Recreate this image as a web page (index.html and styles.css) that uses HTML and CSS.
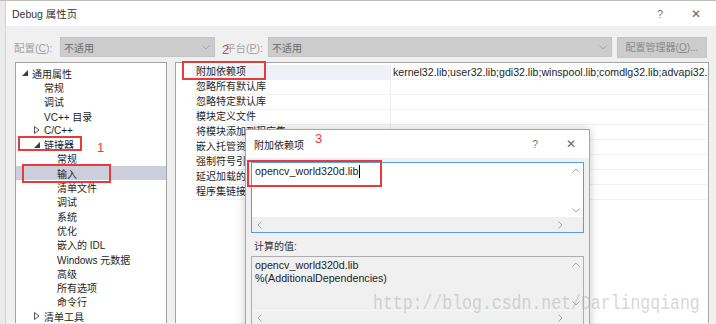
FILE: index.html
```html
<!DOCTYPE html>
<html lang="zh-CN">
  <head>
    <meta charset="UTF-8" />
    <title>Debug 属性页</title>
    <link rel="stylesheet" href="styles.css">
  </head>
  <body>
    <div class="window">
      <div class="titlebar">
        <span class="title">Debug 属性页</span>
        <span class="tb-btn">?</span>
        <span class="tb-btn close">✕</span>
      </div>

      <div class="toolbar">
        <span class="lbl lbl-config">配置(<u>C</u>):</span>
        <div class="combo combo-config">
          <span>不适用</span>
          <svg class="chev" width="8" height="5" viewBox="0 0 8 5"><polyline points="0.5,0.5 4,4 7.5,0.5" /></svg>
        </div>
        <span class="lbl lbl-platform">平台(<u>P</u>):</span>
        <div class="combo combo-platform">
          <span>不适用</span>
          <svg class="chev" width="8" height="5" viewBox="0 0 8 5"><polyline points="0.5,0.5 4,4 7.5,0.5" /></svg>
        </div>
        <div class="btn">配置管理器(<u>O</u>)...</div>
      </div>

      <div class="main">
        <div class="tree">
          <div class="node lv0"><span class="tog"><svg width="6" height="6" viewBox="0 0 6 6"><polygon class="open" points="6,0 6,6 0,6" /></svg></span>通用属性</div>
          <div class="node lv1"><span class="tog"></span>常规</div>
          <div class="node lv1"><span class="tog"></span>调试</div>
          <div class="node lv1"><span class="tog"></span>VC++ 目录</div>
          <div class="node lv1"><span class="tog"><svg width="6" height="8" viewBox="0 0 6 8"><polygon class="shut" points="0.5,0.5 5,4 0.5,7.5" /></svg></span>C/C++</div>
          <div class="node lv1"><span class="tog"><svg width="6" height="6" viewBox="0 0 6 6"><polygon class="open" points="6,0 6,6 0,6" /></svg></span>链接器</div>
          <div class="node lv2"><span class="tog"></span>常规</div>
          <div class="node lv2 sel"><span class="tog"></span>输入</div>
          <div class="node lv2"><span class="tog"></span>清单文件</div>
          <div class="node lv2"><span class="tog"></span>调试</div>
          <div class="node lv2"><span class="tog"></span>系统</div>
          <div class="node lv2"><span class="tog"></span>优化</div>
          <div class="node lv2"><span class="tog"></span>嵌入的 IDL</div>
          <div class="node lv2"><span class="tog"></span>Windows 元数据</div>
          <div class="node lv2"><span class="tog"></span>高级</div>
          <div class="node lv2"><span class="tog"></span>所有选项</div>
          <div class="node lv2"><span class="tog"></span>命令行</div>
          <div class="node lv1"><span class="tog"><svg width="6" height="8" viewBox="0 0 6 8"><polygon class="shut" points="0.5,0.5 5,4 0.5,7.5" /></svg></span>清单工具</div>
        </div>

        <div class="grid">
          <div class="prop active"><span class="gut"></span><span class="name">附加依赖项</span><span class="val">kernel32.lib;user32.lib;gdi32.lib;winspool.lib;comdlg32.lib;advapi32.lib;shell32.lib;ole32.lib</span></div>
          <div class="prop"><span class="gut"></span><span class="name">忽略所有默认库</span><span class="val"></span></div>
          <div class="prop"><span class="gut"></span><span class="name">忽略特定默认库</span><span class="val"></span></div>
          <div class="prop"><span class="gut"></span><span class="name">模块定义文件</span><span class="val"></span></div>
          <div class="prop"><span class="gut"></span><span class="name">将模块添加到程序集</span><span class="val"></span></div>
          <div class="prop"><span class="gut"></span><span class="name">嵌入托管资源文件</span><span class="val"></span></div>
          <div class="prop"><span class="gut"></span><span class="name">强制符号引用</span><span class="val"></span></div>
          <div class="prop"><span class="gut"></span><span class="name">延迟加载的 DLL</span><span class="val"></span></div>
          <div class="prop"><span class="gut"></span><span class="name">程序集链接资源</span><span class="val"></span></div>
        </div>
      </div>

      <!-- 附加依赖项 对话框 -->
      <div class="dialog">
        <div class="dlg-title">
          <span class="title">附加依赖项</span>
          <span class="tb-btn">?</span>
          <span class="tb-btn close">✕</span>
        </div>
        <div class="dlg-body">
          <div class="textbox edit">
            <div class="tb-text">opencv_world320d.lib<span class="caret"></span></div>
            <div class="vscroll">
              <svg width="8" height="5" viewBox="0 0 8 5"><polyline points="0.5,4.5 4,1 7.5,4.5" /></svg>
              <svg width="8" height="5" viewBox="0 0 8 5"><polyline points="0.5,0.5 4,4 7.5,0.5" /></svg>
            </div>
            <div class="hscroll">
              <svg width="5" height="8" viewBox="0 0 5 8"><polyline points="4.5,0.5 1,4 4.5,7.5" /></svg>
              <svg width="5" height="8" viewBox="0 0 5 8"><polyline points="0.5,0.5 4,4 0.5,7.5" /></svg>
            </div>
          </div>
          <div class="calc-lbl">计算的值:</div>
          <div class="textbox readonly">
            <div class="tb-text">opencv_world320d.lib<br>%(AdditionalDependencies)</div>
            <div class="vscroll">
              <svg width="8" height="5" viewBox="0 0 8 5"><polyline points="0.5,4.5 4,1 7.5,4.5" /></svg>
              <svg width="8" height="5" viewBox="0 0 8 5"><polyline points="0.5,0.5 4,4 7.5,0.5" /></svg>
            </div>
            <div class="hscroll">
              <svg width="5" height="8" viewBox="0 0 5 8"><polyline points="4.5,0.5 1,4 4.5,7.5" /></svg>
              <svg width="5" height="8" viewBox="0 0 5 8"><polyline points="0.5,0.5 4,4 0.5,7.5" /></svg>
            </div>
          </div>
        </div>
      </div>

      <!-- 标注 -->
      <div class="mark box-linker"></div>
      <div class="mark box-input"></div>
      <div class="mark box-prop"></div>
      <div class="mark box-edit"></div>
      <span class="num num1">1</span>
      <span class="num num2">2</span>
      <span class="num num3">3</span>

      <div class="watermark">http://blog.csdn.net/Darlingqiang</div>
    </div>
  </body>
</html>
```

FILE: styles.css
```css
body {
  margin: 0;
  background-color: #ebebeb;
  border-top: 1px solid #bdbdbd;
  font-family: "Liberation Sans", "Noto Sans CJK SC", sans-serif;
  font-size: 10px;
  color: #1e1e1e;
  overflow: hidden;
  height: 323px;
}
.window {
  position: relative;
  margin-left: 5px;
  height: 323px;
  border-left: 1px solid #d2d2d2;
  background-color: #f0f0f0;
  overflow: hidden;
}
.titlebar {
  display: flex;
  align-items: center;
  height: 25px;
  padding-left: 6px;
  background-color: #fff;
}
.title {
  flex: 1;
  color: #333;
  font-size: 10.5px;
}
.tb-btn {
  width: 36px;
  text-align: center;
  color: #777;
  font-size: 11px;
}
.titlebar .tb-btn:last-child {
  margin-right: 2px;
}
.close {
  font-size: 12px;
  color: #666;
}

.toolbar {
  display: flex;
  align-items: center;
  height: 36px;
  padding: 11px 0 5px 8px;
  box-sizing: border-box;
}
.lbl {
  color: #a2a2a2;
  font-size: 10.5px;
}
.lbl-config {
  width: 46px;
}
.lbl-platform {
  width: 43px;
  margin-left: 10px;
}
.combo {
  display: flex;
  align-items: center;
  justify-content: space-between;
  height: 20px;
  padding: 0 4px 0 3px;
  box-sizing: border-box;
  background-color: #cccccc;
  border: 1px solid #c4c4c4;
  color: #6a6a6a;
}
.combo-config {
  width: 155px;
}
.combo-platform {
  width: 344px;
}
.chev polyline,
.vscroll polyline,
.hscroll polyline {
  fill: none;
  stroke: #a8a8a8;
  stroke-width: 1;
}
.btn {
  width: 90px;
  height: 21px;
  margin-left: 5px;
  line-height: 19px;
  box-sizing: border-box;
  text-align: center;
  background-color: #cccccc;
  border: 1px solid #c4c4c4;
  color: #8a8a8a;
}

.main {
  display: flex;
  gap: 8px;
  padding-left: 9px;
  height: 261px;
}
.tree {
  width: 152px;
  box-sizing: border-box;
  padding-top: 3px;
  background-color: #fff;
  border: 1px solid #a3a3a3;
  border-bottom: none;
}
.node {
  display: flex;
  align-items: center;
  height: 14.3px;
  white-space: nowrap;
}
.lv0 { padding-left: 4px; }
.lv1 { padding-left: 16px; }
.lv2 { padding-left: 29px; }
.tog {
  display: flex;
  align-items: center;
  width: 12px;
  padding-left: 2px;
  box-sizing: border-box;
}
.open {
  fill: #3c3c3c;
}
.shut {
  fill: none;
  stroke: #555;
  stroke-width: 1;
}
.sel {
  background-color: #cccedb;
}

.grid {
  width: 534px;
  box-sizing: border-box;
  padding-top: 2px;
  background-color: #fff;
  border: 1px solid #a3a3a3;
  border-bottom: none;
}
.prop {
  display: grid;
  grid-template-columns: 16px 198px 1fr;
  height: 15px;
}
.prop span {
  line-height: 14px;
  white-space: nowrap;
  overflow: hidden;
}
.name {
  padding-left: 4px;
  border-bottom: 1px solid #f2f2f2;
}
.val {
  padding-left: 2px;
  border-left: 1px solid #ececec;
  border-bottom: 1px solid #f2f2f2;
  font-size: 10.6px;
}
.active .name {
  background-color: #eff1f8;
}

.dialog {
  position: absolute;
  left: 239px;
  top: 128px;
  width: 345px;
  height: 210px;
  box-sizing: border-box;
  background-color: #f0f0f0;
  border: 1px solid #7db0e4;
  box-shadow: 0 0 9px rgba(0, 0, 0, 0.22);
}
.dlg-title {
  display: flex;
  align-items: center;
  height: 28px;
  padding-left: 8px;
  background-color: #fff;
}
.dlg-title .title {
  font-size: 10px;
  color: #222;
}
.dlg-body {
  padding: 4px 5px 0 5px;
}
.textbox {
  display: grid;
  grid-template-columns: 1fr 15px;
  grid-template-rows: 1fr 15px;
  box-sizing: border-box;
}
.edit {
  height: 71px;
  background-color: #fff;
  border: 1px solid #569de5;
}
.readonly {
  height: 70px;
  background-color: #f0f0f0;
  border: 1px solid #adadad;
}
.tb-text {
  padding: 2px 0 0 3px;
  line-height: 13px;
  font-size: 10.7px;
  color: #1e1e1e;
}
.caret {
  display: inline-block;
  width: 1px;
  height: 13px;
  margin-left: 1px;
  vertical-align: -3px;
  background-color: #000;
}
.vscroll {
  display: flex;
  flex-direction: column;
  justify-content: space-between;
  align-items: center;
  padding: 5px 0 4px;
}
.hscroll {
  grid-column: 1 / 3;
  display: flex;
  justify-content: space-between;
  align-items: center;
  padding: 0 20px 0 5px;
  background-color: #f0f0f0;
}
.readonly .hscroll {
  border-top: 1px solid #f7f7f7;
}
.calc-lbl {
  margin: 8px 0 3px 3px;
  line-height: 12px;
  color: #333;
}

.mark {
  position: absolute;
  border: 2px solid #e8393d;
  box-sizing: border-box;
}
.box-linker { left: 12px; top: 135px; width: 64px; height: 15px; }
.box-input { left: 16px; top: 163px; width: 89px; height: 19px; }
.box-prop { left: 176px; top: 60px; width: 84px; height: 19px; }
.box-edit { left: 241px; top: 159px; width: 135px; height: 27px; }
.num {
  position: absolute;
  color: #f0383c;
  font-size: 13px;
  line-height: 14px;
}
.num1 { left: 91px; top: 140px; }
.num2 { left: 216px; top: 42px; }
.num3 { left: 309px; top: 131px; }

.watermark {
  position: absolute;
  left: 367px;
  top: 293px;
  font-family: "Liberation Mono", monospace;
  font-size: 16.5px;
  line-height: 20px;
  color: rgba(175, 175, 175, 0.5);
  transform: scaleY(1.2);
  white-space: nowrap;
}
```
